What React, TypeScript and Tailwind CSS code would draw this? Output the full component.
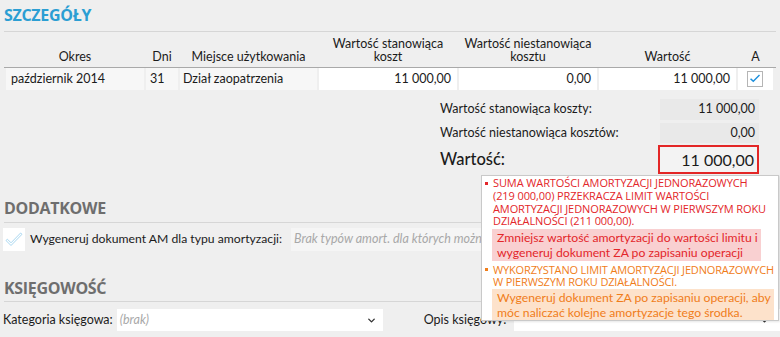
import { ChevronDown } from "lucide-react"

const cols = "grid grid-cols-[138px_32px_137px_138px_138px_137px_35px] gap-x-[2px]"
const openSans = { fontFamily: "'Open Sans', 'Noto Sans', sans-serif" }

function CheckMark({ className }: { className?: string }) {
  return (
    <svg viewBox="0 0 12 10" className={className}>
      <path d="M1 5.2 L4.3 8.3 L11 1.4 L10 0.6 L4.3 6.3 L2.1 4.2 Z" fill="currentColor" />
    </svg>
  )
}

export default function App() {
  return (
    <div
      className="relative h-[337px] w-[780px] overflow-hidden bg-[#efefef] text-[12.5px] text-[#1b1b1b]"
      style={{ fontFamily: "Lato, 'Noto Sans', sans-serif" }}
    >
      {/* Szczegóły */}
      <div className="pt-[4px]">
        <div className="mx-[4px] h-[28px] border-b border-[#d6d6d6]">
          <h2 style={openSans} className="text-[16px] font-bold leading-[22px] tracking-[-0.3px] text-[#2b9ed3]">
            SZCZEGÓŁY
          </h2>
        </div>

        <div className="mx-[4px] border-b border-[#a9a9a9] px-[2px]">
          <div className={`${cols} h-[35px] items-end pb-[4px] text-center leading-[12.5px]`}>
            <div>Okres</div>
            <div>Dni</div>
            <div>Miejsce użytkowania</div>
            <div>
              Wartość stanowiąca
              <br />
              koszt
            </div>
            <div className="whitespace-nowrap">
              Wartość niestanowiąca
              <br />
              kosztu
            </div>
            <div>Wartość</div>
            <div>A</div>
          </div>
        </div>

        <div className={`${cols} ml-[6px] h-[22px] leading-[22px]`}>
          <div className="bg-[#f7f7f7] pl-[5px]">październik 2014</div>
          <div className="bg-[#f7f7f7] pl-[4px]">31</div>
          <div className="bg-[#f7f7f7] pl-[3px]">Dział zaopatrzenia</div>
          <div className="bg-white pr-[6px] text-right">11 000,00</div>
          <div className="bg-white pr-[6px] text-right">0,00</div>
          <div className="bg-white pr-[6px] text-right">11 000,00</div>
          <div className="flex items-center bg-white pl-[9px]">
            <div className="flex h-[16px] w-[16px] items-center justify-center border border-[#b5b5b5] bg-white">
              <CheckMark className="h-[10px] w-[12px] text-[#1c8fdc]" />
            </div>
          </div>
        </div>

        {/* Podsumowanie */}
        <div className="mt-[9px] ml-[440px] w-[319px]">
          <div className="flex h-[21px] items-center justify-between">
            <span>Wartość stanowiąca koszty:</span>
            <span className="flex h-full w-[99px] items-center justify-end bg-[#e9e9e9] pr-[4px]">11 000,00</span>
          </div>
          <div className="mt-[3px] flex h-[20px] items-center justify-between">
            <span>Wartość niestanowiąca kosztów:</span>
            <span className="flex h-full w-[99px] items-center justify-end bg-[#e9e9e9] pr-[4px]">0,00</span>
          </div>
          <div className="mt-[2px] flex h-[29px] items-center justify-between">
            <span className="text-[16.5px] font-medium">Wartość:</span>
            <span className="flex h-full w-[101px] items-center justify-end border-2 border-[#e32626] bg-[#f3f3f3] pr-[3px] text-[16px]">
              11 000,00
            </span>
          </div>
        </div>
      </div>

      {/* Dodatkowe */}
      <div className="mt-[23px]">
        <div className="mx-[4px] h-[26px] border-b border-[#d6d6d6]">
          <h2 style={openSans} className="text-[16px] font-bold leading-[22px] tracking-[-0.3px] text-[#6e6e6e]">
            DODATKOWE
          </h2>
        </div>
        <div className="mt-[5px] flex h-[23px] items-center pl-[3px]">
          <div className="flex h-[23px] w-[22px] items-center justify-center bg-white">
            <svg viewBox="0 0 18 16" className="h-[16px] w-[18px]">
              <path
                d="M1 8.5 L6 13.5 L17 2.3 L15.6 1 L6 10.8 L2.4 7.2 Z"
                fill="none"
                stroke="#9fd3ee"
                strokeWidth="0.9"
                strokeLinejoin="round"
              />
            </svg>
          </div>
          <span className="ml-[5px] text-[12.2px]">Wygeneruj dokument AM dla typu amortyzacji:</span>
          <div className="ml-[9px] flex h-[23px] w-[300px] items-center overflow-hidden whitespace-nowrap bg-[#f5f5f5] pl-[3px] italic text-[#a8a8a8]">
            Brak typów amort. dla których można wygenerować dokument
          </div>
        </div>
      </div>

      {/* Księgowość */}
      <div className="mt-[26px]">
        <div className="mx-[4px] h-[25px] border-b border-[#d6d6d6]">
          <h2 style={openSans} className="text-[16px] font-bold leading-[22px] tracking-[-0.3px] text-[#6e6e6e]">
            KSIĘGOWOŚĆ
          </h2>
        </div>
        <div className="mt-[7px] flex h-[22px] items-center pl-[3px]">
          <span>Kategoria księgowa:</span>
          <div className="ml-[4px] flex h-[22px] w-[266px] items-center justify-between bg-white pl-[3px] pr-[6px]">
            <span className="italic text-[#a8a8a8]">(brak)</span>
            <ChevronDown className="h-[11px] w-[11px] text-[#333]" strokeWidth={3} />
          </div>
          <span className="ml-[41px]">Opis księgowy:</span>
          <div className="ml-[8px] flex h-[22px] flex-1 items-center justify-end bg-white pr-[10px]">
            <ChevronDown className="h-[11px] w-[11px] text-[#333]" strokeWidth={3} />
          </div>
        </div>
      </div>

      {/* Komunikaty walidacji */}
      <div
        style={openSans}
        className="absolute left-[481px] top-[175px] h-[146px] w-[298px] overflow-hidden whitespace-nowrap border border-[#c9c9c9] bg-white pl-[3px] pt-[1px] shadow-[1px_1px_2px_rgba(0,0,0,0.1)]"
      >
        <div className="flex text-[11px] leading-[12.75px] tracking-[-0.1px] text-[#e3262a]">
          <span className="mt-[5px] mr-[5px] h-[3px] w-[3px] shrink-0 bg-[#e3262a]" />
          <div>
            SUMA WARTOŚCI AMORTYZACJI JEDNORAZOWYCH
            <br />
            (219 000,00) PRZEKRACZA LIMIT WARTOŚCI
            <br />
            AMORTYZACJI JEDNORAZOWYCH W PIERWSZYM ROKU
            <br />
            DZIAŁALNOŚCI (211 000,00).
            <div
              style={{ fontFamily: "Lato, sans-serif" }}
              className="-ml-[1px] mt-[1px] w-[269px] bg-[#f9d0d1] px-[5px] py-[1px] text-[12.2px] leading-[15px] tracking-normal"
            >
              Zmniejsz wartość amortyzacji do wartości limitu i
              <br />
              wygeneruj dokument ZA po zapisaniu operacji
            </div>
          </div>
        </div>
        <div className="mt-[3px] flex text-[11px] leading-[11.5px] tracking-[-0.15px] text-[#f07d1a]">
          <span className="mt-[4px] mr-[5px] h-[3px] w-[3px] shrink-0 bg-[#f07d1a]" />
          <div>
            WYKORZYSTANO LIMIT AMORTYZACJI JEDNORAZOWYCH
            <br />
            W PIERWSZYM ROKU DZIAŁALNOŚCI.
            <div
              style={{ fontFamily: "Lato, sans-serif" }}
              className="-ml-[1px] mt-[2px] w-[282px] bg-[#fde2cb] px-[5px] py-[1px] text-[12.2px] leading-[15px] tracking-normal"
            >
              Wygeneruj dokument ZA po zapisaniu operacji, aby
              <br />
              móc naliczać kolejne amortyzacje tego środka.
            </div>
          </div>
        </div>
      </div>
    </div>
  )
}
